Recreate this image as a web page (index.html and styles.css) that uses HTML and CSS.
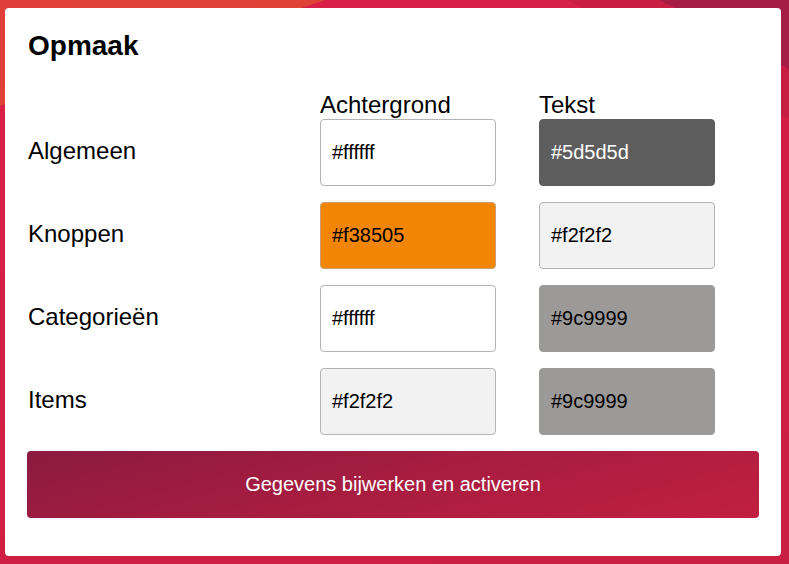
FILE: index.html
```html
<!DOCTYPE html>
<html>
	<head>
		<meta charset="utf-8">
		<title>Opmaak</title>
		<link rel="stylesheet" href="styles.css">
	</head>
	<body>
		<div class="panel">
			<h1 class="header">Opmaak</h1>
			<div class="colHeads">
				<div></div>
				<div>Achtergrond</div>
				<div>Tekst</div>
			</div>
			<div class="colorGrid">
				<label class="rowLabel" for="algBg">Algemeen</label>
				<input class="colorBox" id="algBg" type="text" value="#ffffff">
				<input class="colorBox dark" id="algTx" type="text" value="#5d5d5d">

				<label class="rowLabel" for="knopBg">Knoppen</label>
				<input class="colorBox orange" id="knopBg" type="text" value="#f38505">
				<input class="colorBox light" id="knopTx" type="text" value="#f2f2f2">

				<label class="rowLabel" for="catBg">Categorieën</label>
				<input class="colorBox" id="catBg" type="text" value="#ffffff">
				<input class="colorBox grey" id="catTx" type="text" value="#9c9999">

				<label class="rowLabel" for="itemBg">Items</label>
				<input class="colorBox light" id="itemBg" type="text" value="#f2f2f2">
				<input class="colorBox grey" id="itemTx" type="text" value="#9c9999">
			</div>
			<button class="button" type="button">Gegevens bijwerken en activeren</button>
		</div>
	</body>
</html>
```

FILE: styles.css
```css
html
{
	height: 100%;
	background-color: #cd1f40;
	background-image:
		linear-gradient(162deg, #df3f38 0%, #e04238 12.9%, transparent 12.9%),
		linear-gradient(28deg, transparent 93%, #a51c45 93%),
		linear-gradient(28deg, transparent 88%, rgba(150, 20, 60, 0.2) 88%),
		linear-gradient(160deg, #dc2049 0%, #d11f44 50%, #c91f40 100%);
}
body
{
	margin: 0;
	padding: 8px 8px 8px 5px;
	font-family: "Liberation Sans", Arial, sans-serif;
	color: #000000;
}
.panel
{
	background-color: #ffffff;
	border-radius: 4px;
	padding: 22px 22px 38px 22px;
}
.header
{
	margin: 0 0 29px 1px;
	font-size: 28px;
	line-height: 32px;
	font-weight: bold;
}
.colHeads
{
	display: grid;
	grid-template-columns: 250px 176px 176px;
	column-gap: 43px;
	font-size: 24px;
	line-height: 28px;
}
.colorGrid
{
	display: grid;
	grid-template-columns: 250px 176px 176px;
	column-gap: 43px;
	row-gap: 16px;
	align-items: center;
}
.rowLabel
{
	font-size: 24px;
	padding-left: 1px;
	margin-top: -3px;
}
.colorBox
{
	box-sizing: border-box;
	width: 176px;
	height: 67px;
	margin: 0;
	padding: 0 11px;
	border: 1px solid #b3b3b3;
	border-radius: 4px;
	background-color: #ffffff;
	color: #000000;
	font-family: "Liberation Sans", Arial, sans-serif;
	font-size: 20px;
}
.dark
{
	background-color: #5d5d5d;
	border-color: #5d5d5d;
	color: #ffffff;
}
.orange
{
	background-color: #f38505;
	border-color: #c8a070;
}
.light
{
	background-color: #f2f2f2;
}
.grey
{
	background-color: #9c9999;
	border-color: #9c9999;
}
.button
{
	display: block;
	width: 100%;
	height: 67px;
	margin-top: 16px;
	border: 0;
	border-radius: 4px;
	background-image: linear-gradient(165deg, #8c1a40 0%, #a81d40 50%, #c21f41 100%);
	color: #ffffff;
	font-family: "Liberation Sans", Arial, sans-serif;
	font-size: 20px;
}
```
